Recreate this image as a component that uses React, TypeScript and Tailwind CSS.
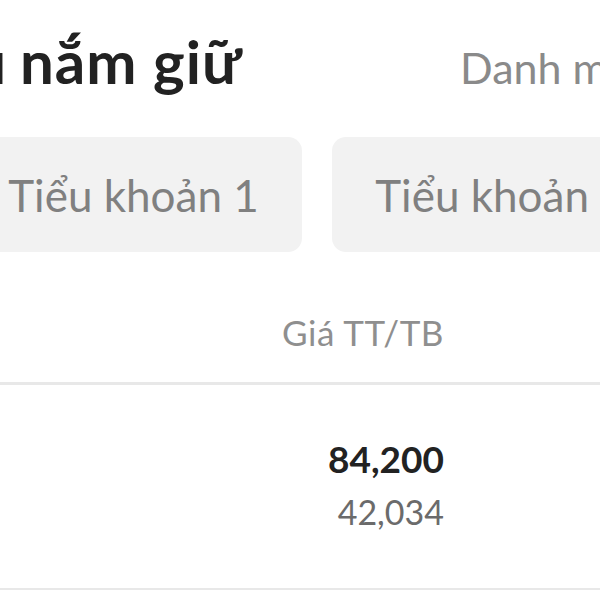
export default function App() {
  return (
    <div className="w-[600px] h-[600px] overflow-hidden bg-white font-['Lato',sans-serif]">
      {/* Tabs */}
      <div className="flex items-baseline pt-[25px] whitespace-nowrap">
        <div className="w-[246px] flex items-baseline shrink-0">
          <span className="w-[6px] flex justify-end overflow-hidden">
            <span className="text-[60px] leading-[72px] font-bold text-[#222222]">Cổ phiếu</span>
          </span>
          <span className="ml-[14px] text-[60px] leading-[72px] font-bold tracking-[1px] text-[#222222]">nắm giữ</span>
        </div>
        <span className="ml-[214px] shrink-0 text-[43px] leading-[52px] text-[#8a8a8a]">Danh mục theo dõi</span>
      </div>

      {/* Sub accounts */}
      <div className="flex gap-[30px] -ml-[35px] mt-[40px]">
        <div className="w-[337px] h-[115px] shrink-0 rounded-[14px] bg-[#f2f2f2] flex items-center justify-center">
          <span className="text-[44px] text-[#808080] whitespace-nowrap">Tiểu khoản 1</span>
        </div>
        <div className="w-[337px] h-[115px] shrink-0 rounded-[14px] bg-[#f2f2f2] flex items-center justify-center">
          <span className="text-[44px] text-[#808080] whitespace-nowrap">Tiểu khoản 2</span>
        </div>
      </div>

      {/* Table header */}
      <div className="w-[444px] mt-[60px] text-right text-[35px] leading-[40px] tracking-[0.5px] text-[#8f8f8f]">Giá TT/TB</div>
      <div className="h-[3px] bg-[#e8e8e8] mt-[30px]" />

      {/* Row */}
      <div className="h-[203px] pt-[52px]">
        <div className="w-[444px] text-right">
          <div className="text-[37px] leading-[44px] font-bold text-[#222222]">84,200</div>
          <div className="mt-[10px] text-[34px] leading-[41px] text-[#6b6b6b]">42,034</div>
        </div>
      </div>
      <div className="h-[2px] bg-[#e8e8e8]" />
    </div>
  );
}
